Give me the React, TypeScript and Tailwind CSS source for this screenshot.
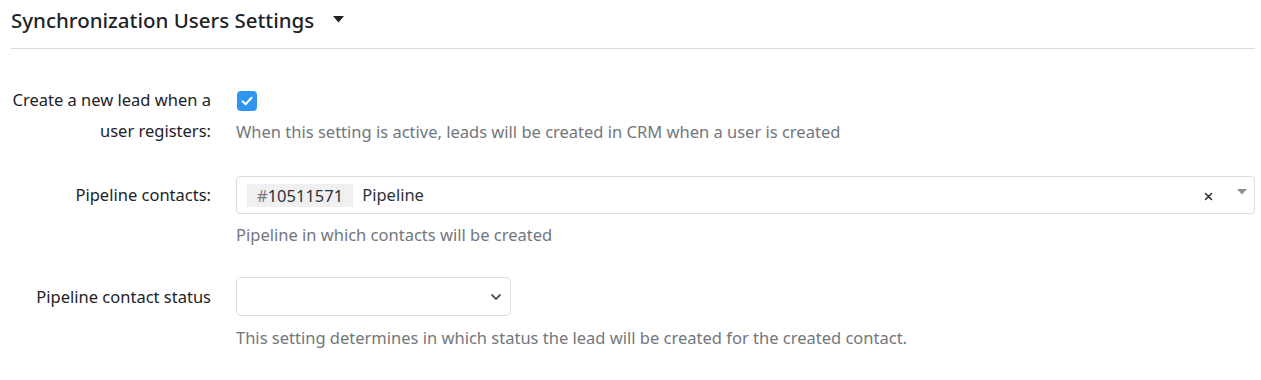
import React from "react";

export default function App() {
  return (
    <div className="w-[1261px] h-[380px] bg-white pl-[11px] pr-[6px] pt-[6px] text-[#1d2327] font-['Noto_Sans',sans-serif]">
      <div className="flex items-center h-[28px]">
        <h2 className="text-[20.5px] leading-[28px] font-medium text-[#1d2327]">
          Synchronization Users Settings
        </h2>
        <svg className="ml-[19px] mt-[-1px]" width="11" height="7" viewBox="0 0 11 7">
          <path d="M0 0 H11 L5.5 6.5 Z" fill="#1d2327" />
        </svg>
      </div>
      <div className="mt-[14px] h-px bg-[#dcdcde]" />

      <div className="mt-[35px] flex flex-col gap-[30px]">
        {/* Row 1 */}
        <div className="flex">
          <div className="w-[200px] shrink-0 text-right text-[16.5px] leading-[31px]">
            Create a new lead when a user registers:
          </div>
          <div className="pl-[25px] flex-1">
            <div className="mt-[7px] w-[20px] h-[20px] ml-[1px] rounded-[4px] bg-[#2e96f0] flex items-center justify-center">
              <svg width="14" height="14" viewBox="0 0 14 14">
                <path d="M2.5 7.2 L5.6 10.2 L11.5 3.8" fill="none" stroke="white" strokeWidth="2" strokeLinecap="round" strokeLinejoin="round" />
              </svg>
            </div>
            <div className="mt-[9px] text-[16.5px] leading-[24px] text-[#72777c]">
              When this setting is active, leads will be created in CRM when a user is created
            </div>
          </div>
        </div>

        {/* Row 2 */}
        <div className="flex">
          <div className="w-[200px] shrink-0 text-right text-[16.5px] leading-[38px]">
            Pipeline contacts:
          </div>
          <div className="pl-[25px] flex-1">
            <div className="h-[38px] border border-[#dcdcde] rounded-[4px] flex items-center pl-[10px] pr-[7px]">
              <span className="h-[23px] px-[10px] bg-[#f0f0f1] flex items-center text-[16.5px] leading-[23px]">
                <span className="text-[#787c82]">#</span>
                <span className="text-[#2c3338]">10511571</span>
              </span>
              <span className="ml-[9px] text-[16.5px] text-[#2c3338]">Pipeline</span>
              <span className="flex-1" />
              <svg width="9" height="9" viewBox="0 0 9 9" className="mr-[24px] mt-[2px]">
                <path d="M1.5 1.5 L7.5 7.5 M7.5 1.5 L1.5 7.5" stroke="#2c3338" strokeWidth="1.6" strokeLinecap="round" />
              </svg>
              <svg width="10" height="6" viewBox="0 0 10 6" className="mt-[-7px]">
                <path d="M0 0 H10 L5 5.5 Z" fill="#8c8f94" />
              </svg>
            </div>
            <div className="mt-[9px] text-[16.5px] leading-[24px] text-[#72777c]">
              Pipeline in which contacts will be created
            </div>
          </div>
        </div>

        {/* Row 3 */}
        <div className="flex">
          <div className="w-[200px] shrink-0 text-right text-[16.5px] leading-[39px]">
            Pipeline contact status
          </div>
          <div className="pl-[25px] flex-1">
            <div className="w-[275px] h-[39px] border border-[#dcdcde] rounded-[5px] flex items-center justify-end pr-[8px]">
              <svg width="12" height="8" viewBox="0 0 12 8">
                <path d="M2 2 L6 6 L10 2" fill="none" stroke="#50575e" strokeWidth="1.8" strokeLinecap="round" strokeLinejoin="round" />
              </svg>
            </div>
            <div className="mt-[10px] text-[16.5px] leading-[24px] text-[#72777c]">
              This setting determines in which status the lead will be created for the created contact.
            </div>
          </div>
        </div>
      </div>
    </div>
  );
}
